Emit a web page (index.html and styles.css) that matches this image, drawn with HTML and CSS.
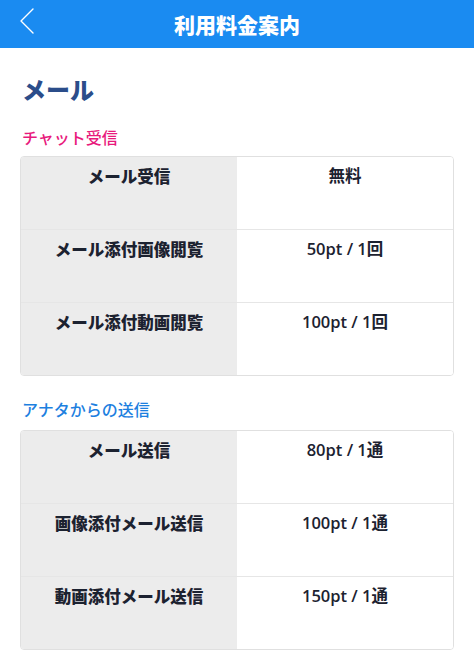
FILE: index.html
```html
<!DOCTYPE html>
<html lang="ja">
<head>
<meta charset="utf-8">
<title>利用料金案内</title>
<link rel="stylesheet" href="styles.css">
</head>
<body>
<header class="topbar">
  <a class="back" href="#" aria-label="戻る">
    <svg width="24" height="40" viewBox="0 0 24 40"><polyline points="14,9 2,21 14,33" fill="none" stroke="#fff" stroke-width="1.4" stroke-linecap="round" stroke-linejoin="round"/></svg>
  </a>
  <h1 class="title">利用料金案内</h1>
</header>
<main class="content">
  <h2 class="section-title">メール</h2>

  <h3 class="sub sub-pink">チャット受信</h3>
  <div class="table">
    <div class="row"><div class="cell label">メール受信</div><div class="cell value">無料</div></div>
    <div class="row"><div class="cell label">メール添付画像閲覧</div><div class="cell value">50pt / 1回</div></div>
    <div class="row"><div class="cell label">メール添付動画閲覧</div><div class="cell value">100pt / 1回</div></div>
  </div>

  <h3 class="sub sub-blue">アナタからの送信</h3>
  <div class="table">
    <div class="row"><div class="cell label">メール送信</div><div class="cell value">80pt / 1通</div></div>
    <div class="row"><div class="cell label">画像添付メール送信</div><div class="cell value">100pt / 1通</div></div>
    <div class="row"><div class="cell label">動画添付メール送信</div><div class="cell value">150pt / 1通</div></div>
  </div>
</main>
</body>
</html>
```

FILE: styles.css
```css
* { box-sizing: border-box; }
html, body {
  margin: 0;
  padding: 0;
  background: #fff;
  font-family: "Noto Sans CJK JP", "Noto Sans", sans-serif;
  color: #1f2430;
}
.topbar {
  position: relative;
  height: 48px;
  background: #1a8bf1;
  display: flex;
  align-items: center;
  justify-content: center;
}
.back {
  position: absolute;
  left: 19px;
  top: 0;
  height: 40px;
  display: flex;
  align-items: center;
}
.title {
  margin: 0;
  color: #fff;
  font-size: 21px;
  font-weight: 900;
  line-height: 1;
}
.content {
  padding: 23px 20px 20px;
}
.section-title {
  margin: 0 0 18px 2px;
  font-size: 24px;
  line-height: 36px;
  font-weight: 900;
  color: #2b4d8a;
}
.sub {
  margin: 0 0 7px 2px;
  font-size: 16px;
  line-height: 24px;
  font-weight: 500;
}
.sub-pink { color: #e8197c; }
.sub-blue { color: #1d80df; margin-top: 21px; margin-bottom: 9px; }
.table {
  border: 1px solid #e0e0e0;
  border-radius: 4px;
  overflow: hidden;
}
.row {
  display: grid;
  grid-template-columns: 1fr 1fr;
  height: 73px;
  border-top: 1px solid #e6e6e6;
}
.row:first-child { border-top: none; height: 72px; }
.cell {
  padding-top: 7px;
  text-align: center;
  line-height: 24px;
}
.label {
  background: #ececec;
  font-size: 16.5px;
  font-weight: 900;
  color: #1c2230;
}
.value {
  background: #fff;
  font-family: "Open Sans", "Noto Sans CJK JP", sans-serif;
  font-size: 16.5px;
  font-weight: 600;
  color: #1c2230;
}
```
